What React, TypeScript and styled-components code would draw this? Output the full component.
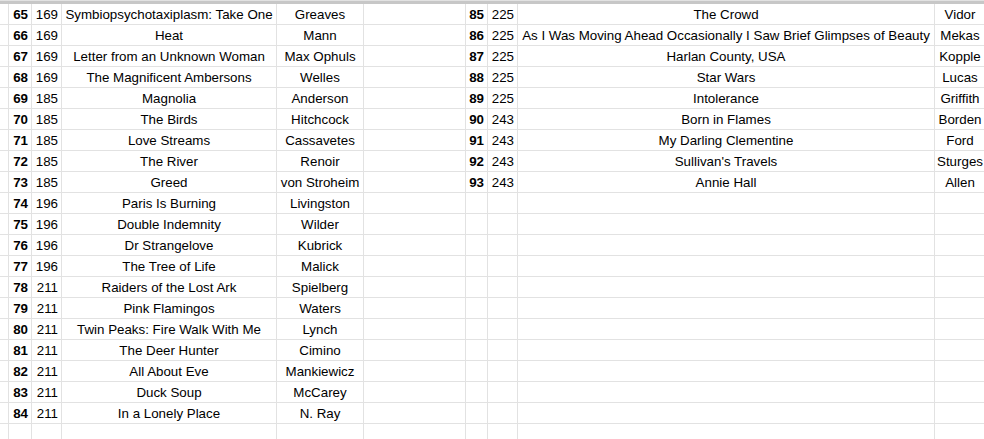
import styled, { createGlobalStyle } from "styled-components";

type Film = [number, number, string, string];

const leftFilms: Film[] = [
  [65, 169, "Symbiopsychotaxiplasm: Take One", "Greaves"],
  [66, 169, "Heat", "Mann"],
  [67, 169, "Letter from an Unknown Woman", "Max Ophuls"],
  [68, 169, "The Magnificent Ambersons", "Welles"],
  [69, 185, "Magnolia", "Anderson"],
  [70, 185, "The Birds", "Hitchcock"],
  [71, 185, "Love Streams", "Cassavetes"],
  [72, 185, "The River", "Renoir"],
  [73, 185, "Greed", "von Stroheim"],
  [74, 196, "Paris Is Burning", "Livingston"],
  [75, 196, "Double Indemnity", "Wilder"],
  [76, 196, "Dr Strangelove", "Kubrick"],
  [77, 196, "The Tree of Life", "Malick"],
  [78, 211, "Raiders of the Lost Ark", "Spielberg"],
  [79, 211, "Pink Flamingos", "Waters"],
  [80, 211, "Twin Peaks: Fire Walk With Me", "Lynch"],
  [81, 211, "The Deer Hunter", "Cimino"],
  [82, 211, "All About Eve", "Mankiewicz"],
  [83, 211, "Duck Soup", "McCarey"],
  [84, 211, "In a Lonely Place", "N. Ray"],
];

const rightFilms: Film[] = [
  [85, 225, "The Crowd", "Vidor"],
  [86, 225, "As I Was Moving Ahead Occasionally I Saw Brief Glimpses of Beauty", "Mekas"],
  [87, 225, "Harlan County, USA", "Kopple"],
  [88, 225, "Star Wars", "Lucas"],
  [89, 225, "Intolerance", "Griffith"],
  [90, 243, "Born in Flames", "Borden"],
  [91, 243, "My Darling Clementine", "Ford"],
  [92, 243, "Sullivan's Travels", "Sturges"],
  [93, 243, "Annie Hall", "Allen"],
];

const ROWS = 21;

function App() {
  const rows = Array.from({ length: ROWS }, (_, i) => i);
  return (
    <>
      <GlobalStyle />
      <Sheet>
        <FrozenBar />
        <Grid>
          {rows.map((i) => {
            const l = leftFilms[i];
            const r = rightFilms[i];
            return (
              <Row key={i}>
                <Cell />
                <Cell $align="right" $bold>{l?.[0]}</Cell>
                <Cell $align="right">{l?.[1]}</Cell>
                <Cell>{l?.[2]}</Cell>
                <Cell>{l?.[3]}</Cell>
                <Cell />
                <Cell $align="right" $bold>{r?.[0]}</Cell>
                <Cell $align="right">{r?.[1]}</Cell>
                <Cell>{r?.[2]}</Cell>
                <Cell $overflow>{r?.[3]}</Cell>
              </Row>
            );
          })}
        </Grid>
      </Sheet>
    </>
  );
}

export default App;

const GlobalStyle = createGlobalStyle`
  html, body {
    margin: 0;
    padding: 0;
    background: #fff;
    overflow: hidden;
  }
  body {
    font-family: "Liberation Sans", Arial, sans-serif;
    font-size: 13.33px;
    color: #000;
  }
`;

const Sheet = styled.div`
  width: 984px;
  height: 439px;
  overflow: hidden;
  background: #fff;
`;

const FrozenBar = styled.div`
  height: 4px;
  box-sizing: border-box;
  border-top: 1px solid #e2e2e2;
  border-bottom: 3px solid #c7c7c7;
  width: 1000px;
`;

const Grid = styled.div`
  display: flex;
  flex-direction: column;
`;

const Row = styled.div`
  display: grid;
  grid-template-columns: 9px 23px 30px 215px 87px 102px 22px 30px 417px 51px;
  height: 21px;
`;

const Cell = styled.div<{ $align?: "right" | "center"; $bold?: boolean; $overflow?: boolean }>`
  box-sizing: border-box;
  border-right: 1px solid #e2e2e2;
  border-bottom: 1px solid #e2e2e2;
  padding: 0 3px 2px;
  display: flex;
  align-items: flex-end;
  justify-content: ${(p) => (p.$align === "right" ? "flex-end" : "center")};
  font-weight: ${(p) => (p.$bold ? 700 : 400)};
  white-space: nowrap;
  overflow: ${(p) => (p.$overflow ? "visible" : "hidden")};
  line-height: 15px;
`;
